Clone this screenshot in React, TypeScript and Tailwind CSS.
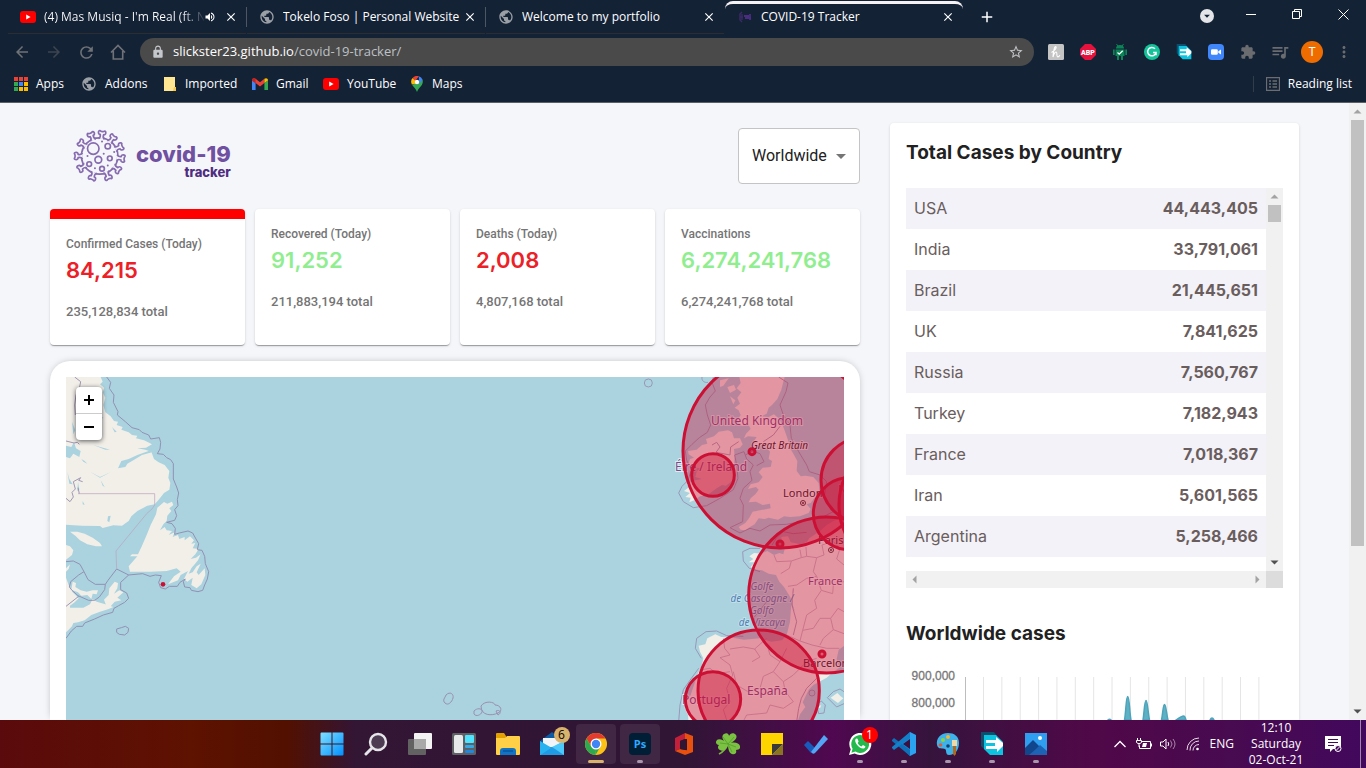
import { Fragment, type ReactNode } from "react";
import {
  MdArrowBack,
  MdArrowForward,
  MdRefresh,
  MdLock,
  MdStarBorder,
  MdExtension,
  MdQueueMusic,
  MdMoreVert,
  MdPublic,
  MdClose,
  MdAdd,
  MdVolumeUp,
  MdArrowDropDown,
} from "react-icons/md";

/* ---------- shared glyphs ---------- */

function YouTubeIcon() {
  return (
    <svg viewBox="0 0 16 12" className="h-3 w-4 shrink-0" aria-hidden="true">
      <rect width="16" height="12" rx="3" fill="#ff0000" />
      <path d="M6.2 3.4 10.6 6 6.2 8.6z" fill="#fff" />
    </svg>
  );
}

function TrackerFavicon() {
  return (
    <svg viewBox="0 0 16 16" className="size-4 shrink-0" aria-hidden="true">
      <path d="M5 3 3 5v6l2 2M5 5v6M3 8h3" stroke="#3a2a66" strokeWidth="1.4" fill="none" />
      <path d="M7 7h5M8 9h6M13 5v6" stroke="#4b2d80" strokeWidth="1.8" fill="none" />
    </svg>
  );
}

function TriangleIcon({ dir, dark }: { dir: "up" | "down" | "left" | "right"; dark?: boolean }) {
  const d = {
    up: "M4.5 10.5h8l-4-4z",
    down: "M4.5 6.5h8l-4 4z",
    left: "M10.5 4.5v8l-4-4z",
    right: "M6.5 4.5v8l4-4z",
  }[dir];
  return (
    <svg viewBox="0 0 17 17" className="size-[17px] shrink-0" aria-hidden="true">
      <path d={d} fill={dark ? "#505050" : "#a3a3a3"} />
    </svg>
  );
}

/* ---------- browser chrome ---------- */

type Tab = { title: string; icon: ReactNode; audio?: boolean; active?: boolean };

const tabs: Tab[] = [
  { title: "(4) Mas Musiq - I'm Real (ft. N", icon: <YouTubeIcon />, audio: true },
  { title: "Tokelo Foso | Personal Website", icon: <MdPublic className="size-4 shrink-0 text-[#9aa0a6]" /> },
  { title: "Welcome to my portfolio", icon: <MdPublic className="size-4 shrink-0 text-[#9aa0a6]" /> },
  { title: "COVID-19 Tracker", icon: <TrackerFavicon />, active: true },
];

function TabStrip() {
  return (
    <div className="flex h-[34px] justify-between">
      <div className="flex min-w-0 flex-1 pl-2" role="tablist">
        {tabs.map((t, i) => (
          <Fragment key={t.title}>
            <div
              className={
                t.active
                  ? "mt-px flex w-[238px] items-center gap-2 rounded-t-lg border-t-3 border-[#f6f2f4] pr-2 pb-1 pl-3"
                  : "flex w-[238px] items-center gap-2 border-b border-[#2b2d33] pr-2 pl-3"
              }
            >
              {t.icon}
              <button role="tab" className="min-w-0 flex-1 overflow-hidden text-left whitespace-nowrap">
                {t.audio ? (
                  <span className="bg-gradient-to-r from-white from-85% to-transparent bg-clip-text text-transparent">
                    {t.title}
                  </span>
                ) : (
                  t.title
                )}
              </button>
              {t.audio && <MdVolumeUp className="-ml-2 size-3 shrink-0 text-white" />}
              <button aria-label="Close tab" className={t.audio ? "shrink-0" : "-ml-2 shrink-0"}>
                <MdClose className="size-3.5" />
              </button>
            </div>
            <span className={i < 2 ? "mt-[7px] h-5 w-px bg-[#4d5663]" : "w-px"} />
          </Fragment>
        ))}
        <button aria-label="New tab" className="ml-3.5 flex items-center">
          <MdAdd className="size-[18px]" />
        </button>
      </div>
      <div className="flex h-7 items-center">
        <button aria-label="Search tabs" className="mt-1 mr-3.5 flex size-3.5 items-center justify-center rounded-full bg-[#e3e5e8]">
          <MdArrowDropDown className="size-4 text-[#142236]" />
        </button>
        <button aria-label="Minimize" className="flex h-7 w-[46px] items-center justify-center">
          <span className="h-px w-2.5 bg-white" />
        </button>
        <button aria-label="Restore" className="flex h-7 w-[46px] items-center justify-center">
          <svg viewBox="0 0 10 10" className="size-2.5" fill="none" stroke="#fff" aria-hidden="true">
            <path d="M.5 2.5h7v7h-7zM2.5 2.5v-2h7v7h-2" />
          </svg>
        </button>
        <button aria-label="Close" className="flex h-7 w-[46px] items-center justify-center">
          <svg viewBox="0 0 11 11" className="size-[11px]" stroke="#fff" aria-hidden="true">
            <path d="M.5.5l10 10M10.5.5l-10 10" />
          </svg>
        </button>
      </div>
    </div>
  );
}

function ShareBadge({ className }: { className: string }) {
  return (
    <svg viewBox="0 0 24 24" className={className} aria-hidden="true">
      <path d="M1 0h13l3 4H5v14l-4-4z" fill="#0b4f6c" />
      <path d="M4 3h12l7 7v13H10l-6-6z" fill="#0cc4e0" />
      <path d="M6 8h10V5l7 6v3l-6 6v-3H6v-3h9v-3H6z" fill="#fff" />
    </svg>
  );
}

const extensions: { name: string; icon: ReactNode }[] = [
  {
    name: "Honey",
    icon: (
      <svg viewBox="0 0 16 16" className="size-4" aria-hidden="true">
        <rect width="16" height="16" rx="1.5" fill="#c4c4c4" />
        <path d="M3.500 8.500C7 6.500 9 3.500 7.800 2.700S5.300 7 5 13c.8-3 2.200-5 3.300-5s0 4.300 1.200 4.800 1.900-.8 2.400-1.500" stroke="#fff" strokeWidth="1.100" fill="none" />
      </svg>
    ),
  },
  {
    name: "Adblock Plus",
    icon: (
      <svg viewBox="0 0 16 16" className="size-4" aria-hidden="true">
        <path d="M5 0h6l5 5v6l-5 5H5l-5-5V5z" fill="#e6123d" />
        <text x="8" y="10.500" textAnchor="middle" fontFamily="Roboto, sans-serif" fontWeight="900" fontSize="7" fill="#fff">
          ABP
        </text>
      </svg>
    ),
  },
  {
    name: "Android",
    icon: (
      <svg viewBox="0 0 16 16" className="size-4" aria-hidden="true">
        <path d="M4 4.500a4 3.500 0 0 1 8 0zM3.500 5.500h9V12h-9zM1 5.500h1.700V11H1zM13.300 5.500H15V11h-1.700zM5 12h2v4H5zM9 12h2v4H9z" fill="#0b8457" />
        <path d="m4.500 0 1.300 2M11.500 0l-1.300 2" stroke="#0b8457" />
        <path d="m5.500 8.500 1.700 1.700 3.500-3.500" stroke="#fff" strokeWidth="1.300" fill="none" />
      </svg>
    ),
  },
  {
    name: "Grammarly",
    icon: (
      <svg viewBox="0 0 16 16" className="size-4" aria-hidden="true">
        <circle cx="8" cy="8" r="8" fill="#15c39a" />
        <path d="M11 4.800A4.200 4.200 0 1 0 12 8.500H9M12 8.500v2.800" stroke="#fff" strokeWidth="1.500" fill="none" />
      </svg>
    ),
  },
  { name: "Share", icon: <ShareBadge className="size-4" /> },
  {
    name: "Zoom",
    icon: (
      <svg viewBox="0 0 16 16" className="size-4" aria-hidden="true">
        <rect width="16" height="16" rx="4" fill="#4087fc" />
        <rect x="3" y="5.300" width="6.800" height="5.400" rx="1.200" fill="#fff" />
        <path d="m10.300 7.200 2.700-1.700v5L10.300 8.800z" fill="#fff" />
      </svg>
    ),
  },
  { name: "Extensions", icon: <MdExtension className="size-4 text-[#6a6c70]" /> },
  { name: "Media", icon: <MdQueueMusic className="size-5 text-[#6a6c70]" /> },
  {
    name: "Profile",
    icon: (
      <span className="flex size-[22px] items-center justify-center rounded-full bg-[#ef6c00] font-[Roboto,sans-serif] text-white">T</span>
    ),
  },
  { name: "Menu", icon: <MdMoreVert className="size-[18px] text-[#6a6c70]" /> },
];

function Toolbar() {
  return (
    <div className="flex h-9 items-center pr-1.5 pl-1.5 text-[#6f7277]">
      <button aria-label="Back" className="flex size-8 items-center justify-center">
        <MdArrowBack className="size-[18px]" />
      </button>
      <button aria-label="Forward" className="flex size-8 items-center justify-center text-[#3d4650]">
        <MdArrowForward className="size-[18px]" />
      </button>
      <button aria-label="Reload" className="flex size-8 items-center justify-center">
        <MdRefresh className="size-[19px]" />
      </button>
      <button aria-label="Home" className="flex size-8 items-center justify-center">
        <svg viewBox="0 0 16 16" className="size-4" fill="none" stroke="currentColor" strokeWidth="1.600" aria-hidden="true">
          <path d="M1 8.500 8 1.500l7 7M3.300 7v8h9.400V7" />
        </svg>
      </button>
      <div className="mr-1.5 ml-1.5 flex h-7 flex-1 items-center rounded-full bg-[#4a4a4a] pr-2.5 pl-[11px]">
        <MdLock className="size-3.5 text-[#c4c7cb]" />
        <a href="#address" className="ml-2 flex-1 text-[13px] text-[#bdc1c6]">
          <span className="text-white">slickster23.github.io</span>/covid-19-tracker/
        </a>
        <button aria-label="Bookmark this page">
          <MdStarBorder className="size-4 text-[#bfc1c4]" />
        </button>
      </div>
      {extensions.map((e) => (
        <button key={e.name} aria-label={e.name} className="flex size-8 items-center justify-center">
          {e.icon}
        </button>
      ))}
    </div>
  );
}

const appDots = ["#ea4335", "#ea4335", "#ea4335", "#34a853", "#4285f4", "#fbbc04", "#34a853", "#fbbc04", "#fbbc04"];

const bookmarks: { label: string; icon: ReactNode; box: string }[] = [
  {
    label: "Apps",
    box: "w-[67px]",
    icon: (
      <span className="grid grid-cols-3 gap-px">
        {appDots.map((c, i) => (
          <span key={i} className="size-1" style={{ backgroundColor: c }} />
        ))}
      </span>
    ),
  },
  { label: "Addons", box: "w-[82px]", icon: <MdPublic className="size-4 text-[#9aa0a6]" /> },
  {
    label: "Imported",
    box: "w-[89px]",
    icon: (
      <svg viewBox="0 0 14 14" className="size-3.5" aria-hidden="true">
        <path d="M1 0h11v14H1z" fill="#ffe693" />
        <path d="M11 10h2v4h-3z" fill="#f5c84c" />
      </svg>
    ),
  },
  {
    label: "Gmail",
    box: "w-[71px]",
    icon: (
      <svg viewBox="0 0 16 12" className="h-3 w-4" aria-hidden="true">
        <path d="M0 2.500V12h3.600V5z" fill="#4285f4" />
        <path d="M16 2.500V12h-3.600V5z" fill="#34a853" />
        <path d="M0 2.600C0 0 2.200-.3 3.600.8L8 4.200 12.400.8V5L8 8.500 3.600 5z" fill="#ea4335" />
        <path d="M12.400.8C13.800-.3 16 0 16 2.600L12.400 5z" fill="#fbbc04" />
        <path d="M0 2.600C0 0 2.200-.3 3.600.8V5z" fill="#c5221f" />
      </svg>
    ),
  },
  { label: "YouTube", box: "w-[87px]", icon: <YouTubeIcon /> },
  {
    label: "Maps",
    box: "w-[60px]",
    icon: (
      <svg viewBox="0 0 12 16" className="h-4 w-3.5" aria-hidden="true">
        <path d="M1.200 9C3 11.600 5 13 6 16c1-3 3-4.400 4.800-7C12 7 12 5 11.500 3.700z" fill="#34a853" />
        <path d="M.9 8.500A6 6 0 0 1 1.500 2L8 7z" fill="#fbbc04" />
        <path d="M1.400 2.200A6 6 0 0 1 8 .3L4.300 4.700z" fill="#ea4335" />
        <path d="M7.800.2a6 6 0 0 1 3.800 3.600L8 8z" fill="#4285f4" />
        <circle cx="6" cy="6" r="2.200" fill="#fff" />
      </svg>
    ),
  },
];

function BookmarksBar() {
  return (
    <div className="flex h-8 items-center pr-3.5 pb-1 pl-3.5">
      {bookmarks.map((b) => (
        <a key={b.label} href="#bookmark" className={`flex items-center gap-2 whitespace-nowrap ${b.box}`}>
          {b.icon}
          {b.label}
        </a>
      ))}
      <button className="ml-auto flex items-center gap-2 border-l border-[#333c49] pl-3">
        <svg viewBox="0 0 14 14" className="size-3.5" fill="none" stroke="#6b6d70" aria-hidden="true">
          <path d="M.5.5h13v13H.5zM3 4h2M6.500 4h4.500M3 7h2M6.500 7h4.500M3 10h2M6.500 10h4.500" strokeWidth="1.300" />
        </svg>
        Reading list
      </button>
    </div>
  );
}

/* ---------- tracker page ---------- */

const spikeAngles = [-22, 6, 36, 66, 96, 127, 158, 199, 237, 270, 305];

function Logo() {
  return (
    <div className="ml-[22px] flex items-center gap-2">
      <svg viewBox="99 69 166 166" className="size-14" fill="none" stroke="#866bb0" strokeWidth="5" aria-hidden="true">
        <circle cx="181" cy="152" r="54" />
        {spikeAngles.map((a) => (
          <path
            key={a}
            d="M-9-51C-3-54-4-60-5-64C-13-63-12-76-7-75C-4-72 4-72 7-75C12-76 13-63 5-64C4-60 3-54 9-51"
            transform={`translate(181 152) rotate(${a})`}
            fill="#f5f6fa"
            strokeLinejoin="round"
          />
        ))}
        <circle cx="162" cy="130" r="17" />
        <circle cx="205" cy="123" r="8" />
        <circle cx="177" cy="163" r="10" />
        <circle cx="211" cy="159" r="7" />
        <circle cx="150" cy="176" r="7" />
        <circle cx="188" cy="190" r="7" />
        <g fill="#866bb0" stroke="none">
          <circle cx="188" cy="109" r="3" />
          <circle cx="145" cy="152" r="3" />
          <circle cx="193" cy="145" r="3" />
          <circle cx="205" cy="180" r="3" />
          <circle cx="167" cy="188" r="3" />
          <circle cx="224" cy="140" r="3" />
        </g>
      </svg>
      <h1 className="flex flex-col items-end pt-2.5 font-[Inter,sans-serif] font-extrabold">
        <span className="text-[22px] leading-[22px] text-[#7050a0]">covid-19</span>
        <span className="text-[13px] leading-[14px] text-[#4f2d82]">tracker</span>
      </h1>
    </div>
  );
}

const stats = [
  { label: "Confirmed Cases (Today)", value: "84,215", total: "235,128,834 total", tone: "red", active: true },
  { label: "Recovered (Today)", value: "91,252", total: "211,883,194 total", tone: "green", active: false },
  { label: "Deaths (Today)", value: "2,008", total: "4,807,168 total", tone: "red", active: false },
  { label: "Vaccinations", value: "6,274,241,768", total: "6,274,241,768 total", tone: "green", active: false },
];

function StatCards() {
  return (
    <div className="mt-[25px] grid grid-cols-4 gap-2.5">
      {stats.map((s) => (
        <section
          key={s.label}
          className={`overflow-hidden rounded bg-white px-4 pt-4 pb-6 font-[Roboto,sans-serif] text-[#757575] shadow-[0_2px_1px_-1px_rgba(0,0,0,0.2),0_1px_1px_rgba(0,0,0,0.14),0_1px_3px_rgba(0,0,0,0.12)] ${
            s.active ? "border-t-10 border-[#ff0000]" : ""
          }`}
        >
          <h3 className="text-xs leading-[18px] font-medium">{s.label}</h3>
          <p
            className={`font-[Inter,sans-serif] text-[22px] leading-[34px] font-semibold ${
              s.tone === "red" ? "text-[#ec2027]" : "text-[#90ee90]"
            }`}
          >
            {s.value}
          </p>
          <p className="mt-4 text-[13px] leading-[18px] font-medium">{s.total}</p>
        </section>
      ))}
    </div>
  );
}

const canadaLand = [
  "M48 66H152L158 80L150 88L163 98L158 112L166 128L160 150L166 172L182 184L192 198L204 200L200 210L218 216L214 224L236 232L246 240L262 242L258 250L282 256L306 268L288 278L262 280L286 284L304 290L312 312L326 322L344 330L358 348L355 368L361 384L358 404L342 414L326 434L314 448L292 452L262 468L244 484L236 498L216 512L190 511L158 519L150 513L96 512L48 509Z",
  "M342 441L352 446L366 440L370 450L358 460L364 468L352 482L350 498L340 508L330 526L344 516L350 526L366 528L356 540L374 532L368 546L384 540L388 552L404 546L404 556L420 544L432 556L424 566L436 564L428 580L446 582L436 598L422 612L438 608L452 598L444 616L424 640L416 656L428 652L440 634L452 626L440 652L446 660L464 640L466 660L454 688L440 700L424 690L428 668L412 680L402 672L414 648L392 660L384 676L354 688L372 664L392 650L380 640L350 648L300 650L240 650L236 634L262 604L240 604L246 598L264 598L276 572L290 540L302 510L318 478L322 458Z",
  "M60 530L82 530L104 536L128 548L150 564L156 574L138 574L112 568L90 556L76 542Z",
  "M68 680L78 684L76 696L92 706L110 710L128 706L144 706L140 718L128 716L124 732L112 720L94 722L84 712L64 704Z",
  "M194 680L204 684L202 700L192 716L208 706L220 712L202 728L214 736L194 740L180 756L168 750L162 734L176 720L178 700Z",
  "M48 570L60 574L70 586L66 600L48 614ZM48 640L60 628L56 642L48 650Z",
  "M48 668L56 690L68 712L86 730L74 742L60 752L60 758L100 758L120 748L128 732L140 740L166 748L190 756L176 762L150 770L124 780L104 796L84 802L70 804L66 814L56 824L48 832Z",
];

const canadaWater = [
  "M204 340L214 318L236 312L262 300L302 286L306 292L276 300L250 316L232 326L226 336Z",
  "M48 272L64 276L72 262L78 280L92 288L88 306L70 296L60 310L48 306Z",
  "M94 312L104 318L112 326L100 320ZM130 270L180 284L166 284ZM120 350L150 366L184 350L150 368ZM52 350L58 372L68 388L58 386ZM174 484L182 482L178 502L172 498ZM66 200L76 226L70 238ZM84 380L88 404L82 408Z",
  "M98 438L104 450L98 448ZM152 376L164 396L158 392ZM158 80L166 100L160 96ZM160 186L150 200L140 192ZM200 230L186 216L194 232Z",
];

const canadaBorders = [
  "M170 66L182 82L178 100L192 120L190 142L204 170L202 180L226 200L246 218L268 224L276 232L296 240L302 252L328 248L332 262L330 282L322 296L340 298L350 308L362 314L370 326L370 372L380 396L386 414L382 434L384 452L374 464L380 482L374 496L350 502L366 506L376 520L374 538L388 534L414 528L428 534L438 552L446 566L442 584L456 586L464 604L466 626L476 650L472 672L464 690L458 706L444 710L424 706L420 698L404 696L400 680L406 672L390 682L382 694L358 694L346 702L332 698L326 682L334 662L316 660L300 664L278 656L236 660L212 682L212 704L230 714L236 730L224 742L206 752L192 760L188 772L160 780L134 792L104 804L98 814L80 814L64 828L48 850",
  "M48 258L72 264L82 262L88 268M74 66L92 80L88 100L78 120L74 150L76 180M98 380L86 376L92 368L70 380L76 402L66 412L70 426L60 440L48 430M84 398L88 416",
  "M48 620L70 618L90 628L102 650L86 660L62 680L58 696L66 706L84 722L116 736L134 736L148 726L164 704L166 688L136 688L114 674L102 650M48 754L86 724M166 688L174 676L200 642L236 660",
  "M200 822L214 818L226 814L236 820L234 832L224 840L208 838L200 832Z",
];

const europeLand = [
  "M358 66H494L490 80L484 104L472 132L456 150L446 158L440 176L424 184L446 186L462 178L478 192L490 216L498 238L506 262L508 276L520 296L532 318L530 348L542 364L556 362L580 366L596 384L598 408L584 428L572 444L560 448L572 462L566 474L540 484L510 486L492 484L474 494L446 488L434 492L416 490L404 508L386 518L376 526L362 524L356 516L376 504L388 488L398 470L420 466L452 460L450 446L428 450L408 440L386 442L392 430L406 418L416 404L408 396L384 402L392 388L416 382L428 366L416 352L428 338L452 336L456 318L446 312L450 290L440 278L444 264L420 272L404 276L398 264L410 246L384 244L372 250L378 236L392 222L384 206L366 214L352 196L362 180L356 166L344 158L360 146L352 128L364 112L350 100L362 84Z",
  "M300 76L326 70L310 92L300 96ZM322 96L342 90L348 104L330 114ZM326 190L338 186L340 204L328 208ZM330 124L346 136L340 148Z",
  "M246 270L262 266L258 252L282 244L296 230L324 226L336 232L342 250L360 250L368 268L360 278L342 282L344 306L342 330L346 352L336 378L318 392L306 390L290 400L262 420L240 424L226 434L208 442L212 428L196 426L210 414L192 408L208 396L200 388L226 376L246 372L226 366L230 350L240 340L214 336L204 330L210 312L222 308L206 298L204 288L230 284Z",
  "M388 604L402 594L424 596L442 588L462 600L478 594L490 598L494 582L486 560L484 546L504 544L512 562L540 568L560 562L568 550L600 528L620 510L640 498L690 480V860L680 868L656 884L650 912L658 938L640 950L620 968L602 978L580 990L566 1004L548 1042L556 1056L540 1078L530 1110H206L204 1080L194 1060L200 1040L212 1020L222 990L232 960L246 930L250 910L240 890L236 872L256 868L262 850L286 838L304 846L338 848L372 854L420 850L454 860L486 856L500 840L510 800L514 748L524 768L512 728L492 696L478 680L468 660L446 656L426 646L410 644L392 636L404 622L386 622L400 612Z",
  "M632 1028L652 1014L662 1024L670 1030L654 1044L640 1034ZM592 1056L604 1050L600 1060Z",
];

const europeLines = [
  "M280 66L276 82L286 108L270 126L256 150L262 180L272 210L262 232L238 248L216 268L196 288L200 316L214 344L204 376L186 394L176 414L190 440L220 458L260 452L300 430L340 404L354 370L350 330L344 300L372 290L380 312L400 330L390 350L396 376L370 400L360 430L370 450L368 500L330 518L360 534L390 520L420 528L450 510L500 508L550 498L600 490L640 470",
  "M476 66L504 84L498 110L480 150L490 180L510 210L514 250L536 290L560 330L568 350L600 360L620 380L612 430",
  "M430 260L460 240L480 214M276 270L290 262L300 276L288 292L330 300L332 276L356 260M376 300L398 288L420 296L432 320L410 332",
  "M420 580L390 580L368 590L370 618L388 640L420 650M456 570L470 548L490 530L520 536L560 532M400 790L440 740M520 840L530 800L516 750L520 700",
  "M258 830L230 850L226 880L244 910M258 830L290 828L320 842L370 844M236 940L214 970L190 1004L180 1050L176 1100M590 970L560 1000L544 1030L536 1060L530 1100",
];

const regionLines = [
  "M462 600L470 620L514 618L508 640L482 656M514 618L544 608L540 584M544 608L560 604L558 576M560 604L590 608L612 600L606 570L640 560L660 580L650 612L672 630M590 608L580 650L590 664L560 670L530 690L504 694M590 664L604 706L638 716L640 690L672 680M604 706L584 736L590 760L560 780L548 826L580 820L600 790L632 790L654 760L672 770M548 826L540 858M632 790L640 824L672 836M640 824L610 850L600 870",
  "M310 850L314 880L330 900L300 908L330 930L338 960L320 1000L330 1040L310 1064L320 1095M330 882L370 876L404 882L440 850M404 882L420 906L396 920M440 864L450 900L480 920L500 880M480 920L460 950L430 964L420 1000L384 1010L350 990L340 950M460 950L490 980L520 960L560 920L590 910M490 980L496 1010L520 1040L490 1060L450 1050L440 1074L380 1080L372 1095M245 944L270 940L290 956L330 950",
  "M500 840L540 858L576 870L620 880L658 880",
];

const markers = [
  { cx: 480, cy: 288, r: 291 },
  { cx: 279, cy: 360, r: 64 },
  { cx: 396, cy: 290, r: 9 },
  { cx: 732, cy: 376, r: 129 },
  { cx: 688, cy: 476, r: 108 },
  { cx: 852, cy: 450, r: 195 },
  { cx: 620, cy: 720, r: 234 },
  { cx: 480, cy: 567, r: 9 },
  { cx: 416, cy: 1007, r: 182 },
  { cx: 279, cy: 1033, r: 83 },
  { cx: 606, cy: 897, r: 9 },
];

function MapCanvas() {
  return (
    <svg viewBox="0 0 778 343" preserveAspectRatio="xMidYMin slice" className="h-full w-full bg-[#aad3df]" role="img" aria-label="Case map">
      <g transform="translate(-16 -22) scale(.33333)">
        {canadaLand.map((d) => (
          <path key={d} d={d} fill="#f2efe9" />
        ))}
        {canadaWater.map((d) => (
          <path key={d} d={d} fill="#aad3df" />
        ))}
        <g fill="none" stroke="#8d7fa6" strokeWidth="3" strokeLinejoin="round" opacity=".8">
          {canadaBorders.map((d) => (
            <path key={d} d={d} />
          ))}
        </g>
        <path d="M84 416H314V450L306 462L290 476L198 588L200 642" fill="none" stroke="#b9a3bd" strokeWidth="3" opacity=".7" />
        <circle cx="339" cy="688" r="7" fill="#cc1034" />
      </g>
      <g fill="none" stroke="#9a8fb0">
        <path d="M380 318c4-4 8-1 7 3s-5 8-8 5 0-5 1-8z" />
        <path d="M408 334c4-4 9-2 8 1s-6 5-8 2zM415 329c4-6 14-4 14-1 6 0 8 6 3 8-6 3-17 3-17-7zM430 334c4-2 6 2 2 4z" />
      </g>
      <g transform="translate(554 -22) scale(.33333)">
        {europeLand.map((d) => (
          <path key={d} d={d} fill="#f2efe9" />
        ))}
        <g fill="none" stroke="#9484a8" strokeWidth="3" strokeLinejoin="round" opacity=".75">
          <circle cx="85" cy="84" r="12" />
          <path d="M246 66C244 78 254 84 264 82" />
          {europeLines.map((d) => (
            <path key={d} d={d} />
          ))}
          <path d="M622 1028L640 1010L660 1002L672 1010M622 1028L650 1056L672 1046M590 1050L604 1038L616 1050L612 1074L596 1076Z" />
          <circle cx="576" cy="1014" r="9" />
        </g>
        <g fill="none" stroke="#b8a0b8" strokeWidth="3" strokeLinejoin="round" opacity=".7">
          {regionLines.map((d) => (
            <path key={d} d={d} />
          ))}
        </g>
      </g>
      <g fontFamily="'Noto Sans', sans-serif" fontSize="11" stroke="#fff" strokeOpacity=".6" strokeWidth="2" paintOrder="stroke">
        <g fill="#7d4a86">
          <text x="645" y="48" fontSize="12">United Kingdom</text>
          <text x="609" y="94" fontSize="12">Éire / Ireland</text>
          <text x="742" y="208">France</text>
          <text x="681" y="318" fontSize="12">España</text>
          <text x="616" y="327" fontSize="12">Portugal</text>
          <text x="772" y="116">N</text>
        </g>
        <g fill="#2b1a24">
          <text x="717" y="120">London</text>
          <text x="752" y="167">Paris</text>
          <text x="737" y="290">Barcelona</text>
        </g>
        <text x="685" y="72" fontSize="10" fontStyle="italic" fill="#2b1a24">Great Britain</text>
        <g fontSize="10" fontStyle="italic" fill="#4f7fb5" strokeOpacity=".3" textAnchor="middle">
          <text x="696" y="213">Golfe</text>
          <text x="696" y="225">de Gascogne /</text>
          <text x="696" y="237">Golfo</text>
          <text x="696" y="249">de Vizcaya</text>
        </g>
      </g>
      <g fill="none" stroke="#4a3038">
        <circle cx="737" cy="126" r="2.500" />
        <circle cx="765" cy="173" r="2.500" />
      </g>
      <g fill="#4a3038">
        <circle cx="737" cy="126" r="1" />
        <circle cx="765" cy="173" r="1" />
      </g>
      <g transform="translate(554 -22) scale(.33333)" fill="#cc1034" fillOpacity=".4" stroke="#cc1034" strokeWidth="9">
        {markers.map((m) => (
          <circle key={`${m.cx}-${m.cy}`} {...m} />
        ))}
      </g>
    </svg>
  );
}

function MapCard() {
  return (
    <section className="mt-4 min-h-0 flex-1 rounded-t-[20px] bg-white px-4 pt-4 shadow-[0_0_8px_-3px_rgba(0,0,0,0.4)]">
      <div className="relative h-full">
        <MapCanvas />
        <div className="absolute top-2.5 left-2.5 flex flex-col overflow-hidden rounded bg-white shadow-[0_1px_5px_rgba(0,0,0,0.65)]">
          <button aria-label="Zoom in" className="flex h-[27px] w-[26px] items-center justify-center border-b border-[#ccc]">
            <svg viewBox="0 0 10 10" className="size-2.5" stroke="#000" strokeWidth="2" aria-hidden="true">
              <path d="M0 5h10M5 0v10" />
            </svg>
          </button>
          <button aria-label="Zoom out" className="flex h-[26px] w-[26px] items-center justify-center">
            <svg viewBox="0 0 10 10" className="size-2.5" stroke="#000" strokeWidth="2" aria-hidden="true">
              <path d="M0 5h10" />
            </svg>
          </button>
        </div>
      </div>
    </section>
  );
}

const countries = [
  ["USA", "44,443,405"],
  ["India", "33,791,061"],
  ["Brazil", "21,445,651"],
  ["UK", "7,841,625"],
  ["Russia", "7,560,767"],
  ["Turkey", "7,182,943"],
  ["France", "7,018,367"],
  ["Iran", "5,601,565"],
  ["Argentina", "5,258,466"],
];

function CountryTable() {
  return (
    <div className="mt-[21px]">
      <div className="flex">
        <div className="min-w-0 flex-1 pb-3.5">
          <table className="w-full border-collapse text-base text-[#6a5d5d]">
            <tbody>
              {countries.map(([name, cases]) => (
                <tr key={name} className="h-[41px] odd:bg-[#f3f2f8]">
                  <td className="px-2 pb-0.5">{name}</td>
                  <td className="px-2 pb-0.5 text-right font-bold">{cases}</td>
                </tr>
              ))}
            </tbody>
          </table>
        </div>
        <div className="flex w-[17px] flex-col items-center bg-[#f1f1f1]">
          <TriangleIcon dir="up" />
          <div className="h-[17px] w-[13px] bg-[#c1c1c1]" />
          <div className="flex-1" />
          <TriangleIcon dir="down" dark />
        </div>
      </div>
      <div className="flex h-[17px] bg-[#f1f1f1]">
        <TriangleIcon dir="left" />
        <div className="flex-1" />
        <TriangleIcon dir="right" />
        <div className="w-[17px] bg-[#dcdcdc]" />
      </div>
    </div>
  );
}

const gridLines = Array.from({ length: 16 }, (_, i) => 77.5 + i * 18.36);

function CasesChart() {
  return (
    <svg viewBox="0 0 377 56" preserveAspectRatio="xMinYMin slice" className="mt-4 w-full flex-1" role="img" aria-label="Worldwide cases chart">
      <g stroke="#e5e5e5">
        {gridLines.map((x) => (
          <path key={x} d={`M${x} 13V56`} />
        ))}
      </g>
      <path d="M59.500 13V56" stroke="#bdbdbd" />
      <path
        d="M202 56Q203.500 54.500 205 56ZM218.500 56C220 48 220 32.500 221.700 32.500S223.500 48 225 56ZM237 56C238.300 48 238.500 36.500 240 36.500S241.900 48 243.500 56ZM255.500 56C256.800 50 257 40.500 258.500 40.500S260.500 50 262 56ZM270 56C273 54 276 52 277.500 52S279.300 54 280 56ZM304 56Q306 52 308 56Z"
        fill="#5eb0c4"
        stroke="#4da4ba"
        strokeWidth="1.500"
      />
      <g fontFamily="'Liberation Sans', sans-serif" fontSize="12" fill="#777" stroke="#777" strokeWidth=".3" textAnchor="end">
        <text x="49" y="16">900,000</text>
        <text x="49" y="43">800,000</text>
      </g>
    </svg>
  );
}

function TrackerPage() {
  return (
    <main className="flex min-h-0 flex-1 bg-[#f5f6fa]">
      <div className="grid min-w-0 flex-1 grid-cols-[minmax(0,1fr)_409px] gap-[30px] px-[50px] pt-5">
        <div className="flex min-h-0 flex-col pt-[5px]">
          <div className="flex items-center justify-between">
            <Logo />
            <div className="relative">
              <select
                aria-label="Country"
                defaultValue="worldwide"
                className="h-14 w-[122px] appearance-none rounded border border-[#c4c4c4] bg-white pl-[13px] font-[Roboto,sans-serif] text-base text-[#212121]"
              >
                <option value="worldwide">Worldwide</option>
              </select>
              <MdArrowDropDown className="pointer-events-none absolute top-4 right-[7px] size-6 text-[#757575]" />
            </div>
          </div>
          <StatCards />
          <MapCard />
        </div>
        <section className="flex min-h-0 flex-col rounded-t bg-white p-4 pb-0 font-[Inter,sans-serif] shadow-[0_1px_3px_rgba(0,0,0,0.15)]">
          <h2 className="text-[19px] leading-7 font-bold text-[#212121]">Total Cases by Country</h2>
          <CountryTable />
          <h2 className="mt-8 text-[19px] leading-7 font-bold text-[#212121]">Worldwide cases</h2>
          <CasesChart />
        </section>
      </div>
      <div className="flex w-[17px] flex-col items-center bg-[#f1f1f1]">
        <TriangleIcon dir="up" />
        <div className="h-[426px] w-[13px] bg-[#c1c1c1]" />
        <div className="flex-1" />
        <TriangleIcon dir="down" dark />
      </div>
    </main>
  );
}

/* ---------- taskbar ---------- */

type App = { name: string; icon: ReactNode; running?: boolean; open?: boolean; focused?: boolean; badge?: { text: string; tone: string } };

const apps: App[] = [
  {
    name: "Start",
    icon: (
      <svg viewBox="0 0 24 24" className="size-6" aria-hidden="true">
        <defs>
          <linearGradient id="win" x1="0" y1="0" x2="1" y2="1">
            <stop offset="0" stopColor="#7fe0ff" />
            <stop offset="1" stopColor="#0090ff" />
          </linearGradient>
        </defs>
        <path d="M.5 1.500q0-1 1-1H11.500V11.500H.5zM12.500.5H22.500q1 0 1 1V11.500H12.500zM.5 12.500H11.500V23.500H1.500q-1 0-1-1zM12.500 12.500H23.500V22.500q0 1-1 1H12.500z" fill="url(#win)" />
      </svg>
    ),
  },
  {
    name: "Search",
    icon: (
      <svg viewBox="0 0 24 24" className="size-6" fill="none" stroke="#e6e6ea" aria-hidden="true">
        <circle cx="14" cy="10" r="8" strokeWidth="2.400" fill="#4d3c52" />
        <path d="m8 16-6 6" strokeWidth="3" strokeLinecap="round" />
      </svg>
    ),
  },
  {
    name: "Task view",
    icon: (
      <svg viewBox="0 0 24 24" className="size-6" aria-hidden="true">
        <rect x="6" y="1" width="18" height="16" rx="1" fill="#f3f3f3" />
        <rect x="0" y="7" width="18" height="16" rx="1" fill="#626262" />
        <path d="M6 7h12v10H6z" fill="#a9a9a9" />
      </svg>
    ),
  },
  {
    name: "Widgets",
    icon: (
      <svg viewBox="0 0 24 24" className="size-6" aria-hidden="true">
        <rect y="1" width="24" height="22" rx="1.500" fill="#5e6064" />
        <rect x="2" y="3" width="9" height="18" rx="1.500" fill="#e6e8ea" />
        <rect x="13" y="3" width="9" height="8" rx="1" fill="#4fe3ff" />
        <rect x="13" y="13" width="9" height="3" rx="1" fill="#31a8e8" />
        <rect x="13" y="18" width="9" height="3" rx="1" fill="#1d8ae0" />
      </svg>
    ),
  },
  {
    name: "File Explorer",
    icon: (
      <svg viewBox="0 0 24 24" className="size-6" aria-hidden="true">
        <path d="M0 2q0-1 1-1h7l2 3v4H0z" fill="#e2a100" />
        <path d="M0 6h9l2-2h12q1 0 1 1v17q0 1-1 1H1q-1 0-1-1z" fill="#ffcf47" />
        <path d="M4 23v-4q0-3 3-3h10q3 0 3 3v4z" fill="#1173c4" />
        <path d="M7 19h10" stroke="#0a549c" strokeWidth="1.500" />
      </svg>
    ),
  },
  {
    name: "Mail",
    badge: { text: "6", tone: "bg-[#d9b36c] text-black" },
    icon: (
      <svg viewBox="0 0 24 24" className="size-6" aria-hidden="true">
        <path d="M0 9 12 0l12 9v4H0z" fill="#0c59a4" />
        <path d="M3 6h18v9H3z" fill="#f1f5f9" />
        <path d="M0 9v14h24V9L12 16z" fill="#28b3f0" />
        <path d="m0 23 12-8 12-6v14z" fill="#4cc9fa" />
        <path d="m0 23 12-8 12 8z" fill="#1f9be6" />
      </svg>
    ),
  },
  {
    name: "Chrome",
    running: true,
    open: true,
    focused: true,
    icon: (
      <svg viewBox="0 0 24 24" className="size-6" aria-hidden="true">
        <circle cx="12" cy="12" r="11" fill="#fbc116" />
        <path d="M21.500 6.500H12L7.200 14.500 2.500 6.500A11 11 0 0 1 21.500 6.500z" fill="#e33b2e" />
        <path d="M2.500 6.500 7.500 15 12 17 11.500 23A11 11 0 0 1 2.500 6.500z" fill="#2da94f" />
        <path d="m11.500 23 5-8.500L12 17z" fill="#2da94f" />
        <circle cx="12" cy="12" r="5.500" fill="#fff" />
        <circle cx="12" cy="12" r="4.200" fill="#4285f4" />
      </svg>
    ),
  },
  {
    name: "Photoshop",
    running: true,
    open: true,
    icon: (
      <svg viewBox="0 0 24 24" className="size-6" aria-hidden="true">
        <rect x="1" y="1" width="22" height="22" rx="4" fill="#001e36" />
        <text x="12" y="16" textAnchor="middle" fontFamily="'Open Sans', sans-serif" fontWeight="700" fontSize="11" fill="#31a8ff">
          Ps
        </text>
      </svg>
    ),
  },
  {
    name: "Office",
    icon: (
      <svg viewBox="0 0 24 24" className="size-6" aria-hidden="true">
        <path d="m3 6 10-5v6L8 9v8l-5 2z" fill="#c2203a" />
        <path d="m3 19 5-2 5 1 2 .3V7l-2 0V1l8 3v16l-8 3z" fill="#e8500e" />
        <path d="M8 9l5-2h1v11l-6-1z" fill="#301633" />
      </svg>
    ),
  },
  {
    name: "Clover",
    icon: (
      <svg viewBox="0 0 24 24" className="size-6" aria-hidden="true">
        <path d="M12 12C10 17 7 20 3 22" stroke="#7cb342" strokeWidth="1.800" fill="none" />
        <path d="M12 12C6 9 5 4 8 2s5 0 5 2c1-3 5-4 7-1s-2 7-8 9c6-3 11-1 12 2s-2 4-4 4c1 3-1 5-4 4s-4-5-4-10c-1 5-5 8-8 6s-2-4-1-5c-3 0-4-3-2-5s7 0 11 4z" fill="#7bc142" />
        <path d="m12 12-5-7M12 12l6-7M12 12l8 3M12 12l-8-1M12 12l4 8" stroke="#4f9a2a" strokeWidth=".7" />
      </svg>
    ),
  },
  {
    name: "Sticky Notes",
    icon: (
      <svg viewBox="0 0 24 24" className="size-6" aria-hidden="true">
        <path d="M1 1h22v22H1z" fill="#ffd500" />
        <path d="M12 23V12h11z" fill="#3a3a3a" />
        <path d="M12 23 23 12v11z" fill="#8a7420" />
      </svg>
    ),
  },
  {
    name: "To Do",
    icon: (
      <svg viewBox="0 0 24 24" className="size-6" aria-hidden="true">
        <path d="m0 13 4-4 7 7-4 5z" fill="#195abd" />
        <path d="m7 20 13-17 4 4L11 21q-2 2-4-1z" fill="#54a4f5" />
      </svg>
    ),
  },
  {
    name: "WhatsApp",
    running: true,
    badge: { text: "1", tone: "bg-[#ff0000] text-white" },
    icon: (
      <svg viewBox="0 0 24 24" className="size-6" aria-hidden="true">
        <path d="M1 23l1.700-5.700A11 11 0 1 1 6.700 21.400z" fill="#fff" />
        <path d="M3.400 20.700l1.200-4A8.900 8.900 0 1 1 7.500 19.600z" fill="#25b84c" />
        <path d="M8.300 6.500c-1.800 1.200-1.200 3.700.7 6.200s5.200 4.700 7.300 3.600c1.200-.7 1.200-1.700.9-2l-2.300-1.200-1.300 1.400c-1.800-.7-3-1.900-3.900-3.600l.9-1.400-1.100-2.700z" fill="#fff" />
      </svg>
    ),
  },
  {
    name: "VS Code",
    running: true,
    icon: (
      <svg viewBox="0 0 24 24" className="size-6" aria-hidden="true">
        <path d="M18 0 6 12l12 12V17L11 12l7-5z" fill="#1888d8" />
        <path d="m0 8 2-2 16 12v6L0 9z" fill="#0f6fb8" />
        <path d="m0 16 2 2L18 6V0L0 15z" fill="#147fc9" />
        <path d="m18 0 6 3v18l-6 3z" fill="#2ba3f0" />
      </svg>
    ),
  },
  {
    name: "Paint",
    running: true,
    icon: (
      <svg viewBox="0 0 24 24" className="size-6" aria-hidden="true">
        <path d="M12 1C4 1 0 7 1 13c1 5 6 3 8 4s0 6 4 6c6 0 10-5 10-12S18 1 12 1z" fill="#3fb2ea" />
        <circle cx="7" cy="8" r="2" fill="#8ed43e" />
        <circle cx="12" cy="5" r="2" fill="#f5b82e" />
        <circle cx="4.500" cy="13" r="1.800" fill="#e05a3a" />
        <circle cx="12" cy="14" r="1.800" fill="#173d6c" />
        <path d="M16 8h5v6h-5z" fill="#f0d9a8" />
        <path d="M17 14h3v8l-1.500 2L17 22z" fill="#b06a20" />
      </svg>
    ),
  },
  { name: "Share", running: true, icon: <ShareBadge className="size-6" /> },
  {
    name: "Photos",
    running: true,
    icon: (
      <svg viewBox="0 0 24 24" className="size-6" aria-hidden="true">
        <path d="M1 1h22v22H1z" fill="#2f9df0" />
        <path d="m1 16 8-8 14 14v1H1z" fill="#12468c" />
        <path d="m12 17 4-4 7 6v4H5z" fill="#1d63b5" />
        <circle cx="16" cy="6" r="2" fill="#fff" />
      </svg>
    ),
  },
];

function Taskbar() {
  return (
    <footer className="grid h-12 shrink-0 grid-cols-[1fr_auto_1fr] items-center bg-[linear-gradient(90deg,#5a0a0c_0%,#5e1200_14%,#521000_21%,#331534_26%,#301535_50%,#500850_61%,#35143c_68%,#500848_80%,#480a50_90%,#42085c_100%)] text-white">
      <div />
      <nav className="ml-px flex gap-1">
        {apps.map((a) => (
          <button
            key={a.name}
            aria-label={a.name}
            className={`relative flex size-10 items-center justify-center rounded ${a.open ? "bg-white/8" : ""}`}
          >
            {a.icon}
            {a.badge && (
              <span className={`absolute top-[3px] right-0.5 flex size-4 items-center justify-center rounded-full text-xs ${a.badge.tone}`}>
                {a.badge.text}
              </span>
            )}
            {a.running && (
              <span
                className={`absolute bottom-px h-[3px] rounded-full ${a.focused ? "w-4 bg-[#d9b36c]" : "w-1.5 bg-[#a896ac]"}`}
              />
            )}
          </button>
        ))}
      </nav>
      <div className="flex h-full items-center justify-end">
        <button aria-label="Hidden icons" className="flex w-6 justify-center">
          <svg viewBox="0 0 12 8" className="h-2 w-3" fill="none" stroke="#fff" strokeWidth="1.300" aria-hidden="true">
            <path d="m.5 7 5.500-5.500L11.500 7" />
          </svg>
        </button>
        <svg viewBox="0 0 16 12" className="mx-1 h-3 w-4" fill="none" stroke="#fff" aria-hidden="true">
          <path d="M5.500 3.500h9v7h-11v-3M15.500 5.500v3M1.500 0v2M4.500 0v2M.5 2.500h5v2l-1.500 1h-2l-1.500-1zM3 6v3" />
          <path d="M7 5h4l-1 4H6z" fill="#fff" stroke="none" />
        </svg>
        <svg viewBox="0 0 16 12" className="mx-1 h-3 w-4" fill="none" stroke="#fff" aria-hidden="true">
          <path d="M.5 4h2.500l3-3v10l-3-3H.5zM8 4q1.500 2 0 4" />
          <path d="M10.500 2.500q3 3.500 0 7M13 1q4 5 0 10" opacity=".5" />
        </svg>
        <svg viewBox="0 0 14 14" className="mr-2.5 ml-1.5 size-3.5" fill="none" stroke="#fff" aria-hidden="true">
          <path d="M1 13A12 12 0 0 1 13 1M4 13.500A9 9 0 0 1 13 4M7 13.500A6 6 0 0 1 13 7.500" opacity=".85" />
          <circle cx="11.500" cy="12" r="1.300" fill="#fff" stroke="none" />
        </svg>
        <button>ENG</button>
        <button className="mx-1.5 w-[72px] text-center leading-4">
          12:10
          <br />
          Saturday
          <br />
          02-Oct-21
        </button>
        <button aria-label="Notifications" className="mr-[18px] ml-1.5">
          <svg viewBox="0 0 18 16" className="h-4 w-[18px]" aria-hidden="true">
            <path d="M1 0h16v13H9l-3 3v-3H1z" fill="#fff" />
            <path d="M4 3.500h10M4 6.500h10M4 9.500h6" stroke="#45095a" strokeWidth="1.200" />
            <circle cx="14" cy="12.500" r="3" fill="#45095a" stroke="#fff" />
            <path d="m12 14.500 4-4" stroke="#fff" />
          </svg>
        </button>
        <button aria-label="Show desktop" className="h-full w-1.5 border-l border-white/50" />
      </div>
    </footer>
  );
}

export default function App() {
  return (
    <div className="flex h-screen flex-col overflow-hidden font-['Open_Sans',sans-serif] text-xs text-white">
      <header className="shrink-0 border-b border-[#5c5f63] bg-[#142236]">
        <TabStrip />
        <Toolbar />
        <BookmarksBar />
      </header>
      <TrackerPage />
      <Taskbar />
    </div>
  );
}
